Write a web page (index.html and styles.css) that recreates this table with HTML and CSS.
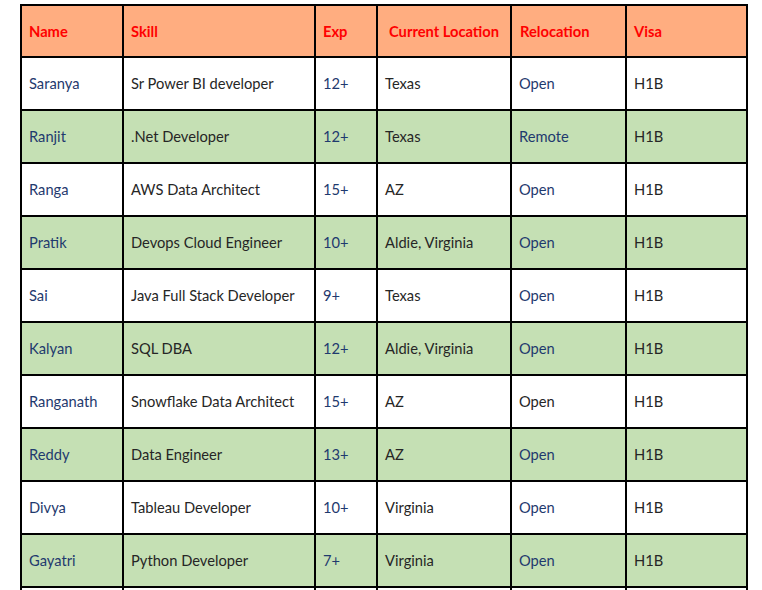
FILE: index.html
```html
<!DOCTYPE html>
<html>
<head>
<meta charset="utf-8">
<link rel="stylesheet" href="styles.css">
</head>
<body>
<table class="grid">
  <colgroup>
    <col class="c-name"><col class="c-skill"><col class="c-exp"><col class="c-loc"><col class="c-rel"><col class="c-visa">
  </colgroup>
  <thead>
    <tr class="head">
      <th>Name</th><th>Skill</th><th>Exp</th><th class="loc-h">Current Location</th><th class="rel-h">Relocation</th><th>Visa</th>
    </tr>
  </thead>
  <tbody>
    <tr><td class="blue">Saranya</td><td>Sr Power BI developer</td><td class="blue">12+</td><td>Texas</td><td class="blue">Open</td><td>H1B</td></tr>
    <tr class="green"><td class="blue">Ranjit</td><td>.Net Developer</td><td class="blue">12+</td><td>Texas</td><td class="blue">Remote</td><td>H1B</td></tr>
    <tr><td class="blue">Ranga</td><td>AWS Data Architect</td><td class="blue">15+</td><td>AZ</td><td class="blue">Open</td><td>H1B</td></tr>
    <tr class="green"><td class="blue">Pratik</td><td>Devops Cloud Engineer</td><td class="blue">10+</td><td>Aldie, Virginia</td><td class="blue">Open</td><td>H1B</td></tr>
    <tr><td class="blue">Sai</td><td>Java Full Stack Developer</td><td class="blue">9+</td><td>Texas</td><td class="blue">Open</td><td>H1B</td></tr>
    <tr class="green"><td class="blue">Kalyan</td><td>SQL DBA</td><td class="blue">12+</td><td>Aldie, Virginia</td><td class="blue">Open</td><td>H1B</td></tr>
    <tr><td class="blue">Ranganath</td><td>Snowflake Data Architect</td><td class="blue">15+</td><td>AZ</td><td>Open</td><td>H1B</td></tr>
    <tr class="green"><td class="blue">Reddy</td><td>Data Engineer</td><td class="blue">13+</td><td>AZ</td><td class="blue">Open</td><td>H1B</td></tr>
    <tr><td class="blue">Divya</td><td>Tableau Developer</td><td class="blue">10+</td><td>Virginia</td><td class="blue">Open</td><td>H1B</td></tr>
    <tr class="green"><td class="blue">Gayatri</td><td>Python Developer</td><td class="blue">7+</td><td>Virginia</td><td class="blue">Open</td><td>H1B</td></tr>
    <tr class="stub"><td>&nbsp;</td><td>&nbsp;</td><td>&nbsp;</td><td>&nbsp;</td><td>&nbsp;</td><td>&nbsp;</td></tr>
  </tbody>
</table>
</body>
</html>
```
FILE: styles.css
```css
html, body {
  margin: 0;
  padding: 0;
  background: #ffffff;
}
html {
  height: 590px;
  overflow: hidden;
}
body {
  padding: 4px 0 0 20px;
  font-family: Lato, "Open Sans", sans-serif;
  font-size: 14.7px;
  color: #262626;
  height: 590px;
  overflow: hidden;
  box-sizing: border-box;
}
.grid {
  border-collapse: collapse;
  table-layout: fixed;
  width: 728px;
}
.c-name { width: 102px; }
.c-skill { width: 192px; }
.c-exp { width: 62px; }
.c-loc { width: 134px; }
.c-rel { width: 115px; }
.c-visa { width: 121px; }
.grid th, .grid td {
  border: 2px solid #000000;
  height: 53px;
  padding: 0 0 2px 7px;
  text-align: left;
  vertical-align: middle;
  white-space: nowrap;
  box-sizing: border-box;
}
.grid th {
  height: 52px;
  padding-bottom: 1px;
  font-weight: 700;
  color: #ff0000;
  background: #ffad80;
}
.grid th.loc-h { padding-left: 11px; }
.grid th.rel-h { padding-left: 8px; }
.grid td { background: #ffffff; }
.grid tr.green td { background: #c5e0b4; }
.grid td.blue { color: #1f3a6e; }
```
